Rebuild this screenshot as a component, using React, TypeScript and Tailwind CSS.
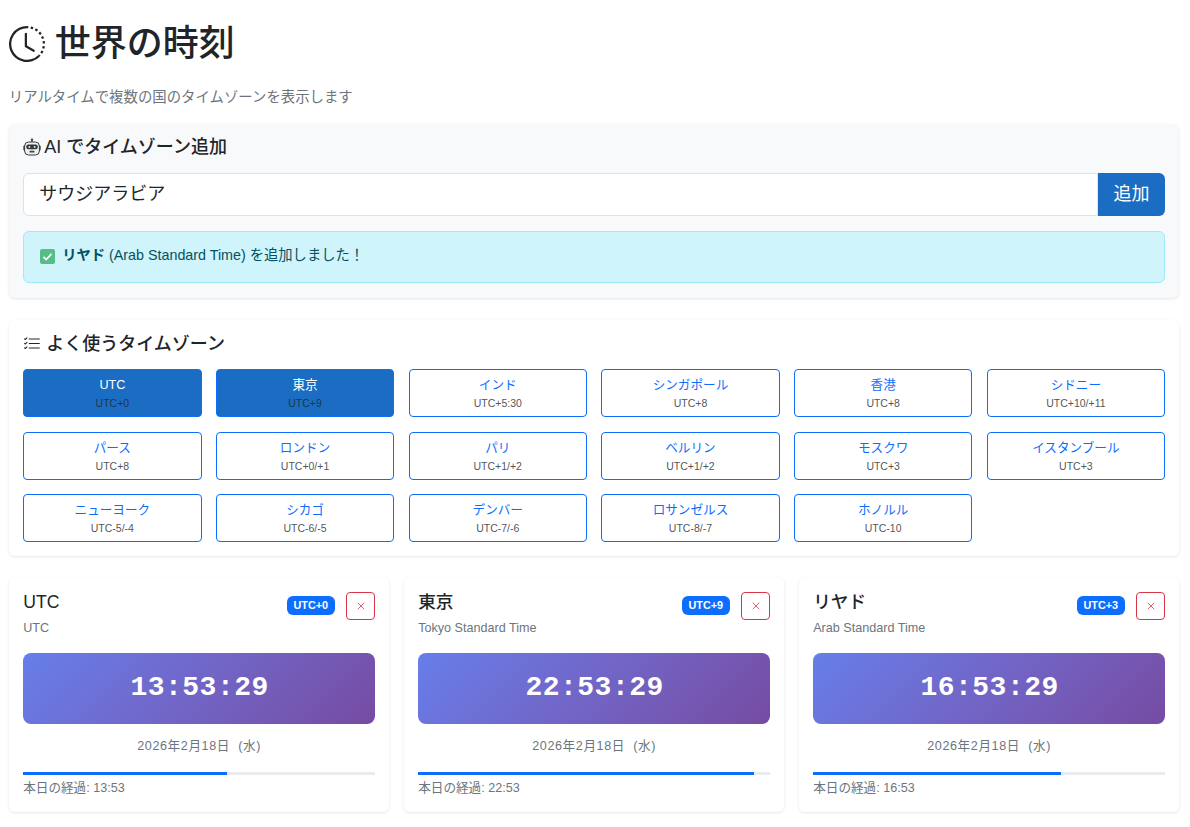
import { X } from "lucide-react";

const sans = "font-['Liberation_Sans','Noto_Sans_CJK_JP',sans-serif]";

const zones = [
  { name: "UTC", offset: "UTC+0", active: true },
  { name: "東京", offset: "UTC+9", active: true },
  { name: "インド", offset: "UTC+5:30" },
  { name: "シンガポール", offset: "UTC+8" },
  { name: "香港", offset: "UTC+8" },
  { name: "シドニー", offset: "UTC+10/+11" },
  { name: "パース", offset: "UTC+8" },
  { name: "ロンドン", offset: "UTC+0/+1" },
  { name: "パリ", offset: "UTC+1/+2" },
  { name: "ベルリン", offset: "UTC+1/+2" },
  { name: "モスクワ", offset: "UTC+3" },
  { name: "イスタンブール", offset: "UTC+3" },
  { name: "ニューヨーク", offset: "UTC-5/-4" },
  { name: "シカゴ", offset: "UTC-6/-5" },
  { name: "デンバー", offset: "UTC-7/-6" },
  { name: "ロサンゼルス", offset: "UTC-8/-7" },
  { name: "ホノルル", offset: "UTC-10" },
];

const clocks = [
  { name: "UTC", tz: "UTC", offset: "UTC+0", time: "13:53:29", elapsed: "13:53", pct: 57.9 },
  { name: "東京", tz: "Tokyo Standard Time", offset: "UTC+9", time: "22:53:29", elapsed: "22:53", pct: 95.4 },
  { name: "リヤド", tz: "Arab Standard Time", offset: "UTC+3", time: "16:53:29", elapsed: "16:53", pct: 70.4 },
];

function ClockHistory() {
  return (
    <svg width="36" height="36" viewBox="0 0 16 16" fill="#212529">
      <path d="M8.515 1.019A7 7 0 0 0 8 1V0a8 8 0 0 1 .589.022zm2.004.45a7 7 0 0 0-.985-.299l.219-.976q.576.129 1.126.342zm1.37.71a7 7 0 0 0-.439-.27l.493-.87a8 8 0 0 1 .979.654l-.615.789a7 7 0 0 0-.418-.302zm1.834 1.79a7 7 0 0 0-.653-.796l.724-.69q.406.429.747.91zm.744 1.352a7 7 0 0 0-.214-.468l.893-.45a8 8 0 0 1 .45 1.088l-.95.313a7 7 0 0 0-.179-.483m.53 2.507a7 7 0 0 0-.1-1.025l.985-.17q.1.58.116 1.17zm-.131 1.538q.05-.254.081-.51l.993.123a8 8 0 0 1-.23 1.155l-.964-.267q.069-.247.12-.501m-.952 2.379q.276-.436.486-.908l.914.405q-.24.54-.555 1.038zm-.964 1.205q.183-.183.35-.378l.758.653a8 8 0 0 1-.401.432z" />
      <path d="M8 1a7 7 0 1 0 4.95 11.95l.707.707A8.001 8.001 0 1 1 8 0z" />
      <path d="M7.5 3a.5.5 0 0 1 .5.5v5.21l3.248 1.856a.5.5 0 0 1-.496.868l-3.5-2A.5.5 0 0 1 7 9V3.5a.5.5 0 0 1 .5-.5" />
    </svg>
  );
}

function RobotEmoji() {
  return (
    <svg width="18" height="18" viewBox="0 0 18 18">
      <circle cx="9" cy="1.8" r="1.2" fill="#3c4650" />
      <rect x="8.4" y="2" width="1.2" height="2.5" fill="#3c4650" />
      <rect x="0.3" y="7.5" width="2" height="5" rx="1" fill="#3c4650" />
      <rect x="15.7" y="7.5" width="2" height="5" rx="1" fill="#3c4650" />
      <rect x="1.6" y="4" width="14.8" height="13" rx="4" fill="#f4f1ea" stroke="#2f3840" strokeWidth="1" />
      <rect x="3.2" y="6.6" width="11.6" height="4.6" rx="2.2" fill="#2f3840" />
      <circle cx="6.4" cy="8.9" r="1" fill="#e8eaec" />
      <circle cx="11.6" cy="8.9" r="1" fill="#e8eaec" />
      <rect x="6.5" y="12.8" width="5" height="1.8" rx="0.6" fill="#3c4650" />
    </svg>
  );
}

function CheckEmoji() {
  return (
    <svg width="15" height="15" viewBox="0 0 15 15">
      <rect width="15" height="15" rx="2" fill="#55bd85" />
      <path d="M3.4 7.8l2.8 2.7 5.3-5.6" fill="none" stroke="#ffffff" strokeWidth="1.7" />
    </svg>
  );
}

function ListCheck() {
  return (
    <svg width="18" height="18" viewBox="0 0 16 16" fill="#212529">
      <path fillRule="evenodd" d="M5 11.5a.5.5 0 0 1 .5-.5h9a.5.5 0 0 1 0 1h-9a.5.5 0 0 1-.5-.5m0-4a.5.5 0 0 1 .5-.5h9a.5.5 0 0 1 0 1h-9a.5.5 0 0 1-.5-.5m0-4a.5.5 0 0 1 .5-.5h9a.5.5 0 0 1 0 1h-9a.5.5 0 0 1-.5-.5M3.854 2.146a.5.5 0 0 1 0 .708l-1.5 1.5a.5.5 0 0 1-.708 0l-.5-.5a.5.5 0 1 1 .708-.708L2 3.293l1.146-1.147a.5.5 0 0 1 .708 0m0 4a.5.5 0 0 1 0 .708l-1.5 1.5a.5.5 0 0 1-.708 0l-.5-.5a.5.5 0 1 1 .708-.708L2 7.293l1.146-1.147a.5.5 0 0 1 .708 0m0 4a.5.5 0 0 1 0 .708l-1.5 1.5a.5.5 0 0 1-.708 0l-.5-.5a.5.5 0 0 1 .708-.708l.146.147 1.146-1.147a.5.5 0 0 1 .708 0" />
    </svg>
  );
}

export default function App() {
  return (
    <div className={`min-h-screen bg-white pl-[8.8px] pr-[10.6px] text-[#212529] ${sans}`}>
      <div className="flex h-[87px] items-center gap-[10px]">
        <ClockHistory />
        <h1 className="text-[36px] font-medium leading-[42px]">世界の時刻</h1>
      </div>
      <p className="h-[37px] text-[14.4px] leading-[20px] text-[#6c757d]">
        リアルタイムで複数の国のタイムゾーンを表示します
      </p>

      <section className="rounded-md bg-[#f8f9fa] px-[14.4px] pb-[15px] pt-[11px] shadow-[0_1px_3px_rgba(0,0,0,0.1)]">
        <h2 className="flex h-[24px] items-center gap-[3px] text-[18px] font-medium">
          <RobotEmoji />
          AI でタイムゾーン追加
        </h2>
        <div className="mt-[14px] flex h-[43px]">
          <div className="flex flex-1 items-center rounded-l-md border border-[#dee2e6] bg-white px-[15px] text-[18px]">
            サウジアラビア
          </div>
          <button className="w-[67px] rounded-r-md bg-[#1a6dc2] text-[18px] text-white">追加</button>
        </div>
        <div className="mt-[15px] flex h-[52px] items-center gap-[7px] rounded-md border border-[#9eeaf9] bg-[#cff4fc] px-[16px] pb-[2px] text-[14.3px] text-[#055160]">
          <CheckEmoji />
          <span>
            <strong className="font-bold">リヤド</strong> (Arab Standard Time) を追加しました！
          </span>
        </div>
      </section>

      <section className="mt-[22px] rounded-md bg-white px-[14.4px] pb-[13.6px] pt-[11px] shadow-[0_1px_3px_rgba(0,0,0,0.1)]">
        <h2 className="flex h-[26px] items-center gap-[5px] text-[18px] font-medium">
          <ListCheck />
          よく使うタイムゾーン
        </h2>
        <div className="mt-[12.4px] grid grid-cols-6 gap-[14.4px]">
          {zones.map((z) => (
            <button
              key={z.name}
              className={`flex h-[48px] flex-col items-center justify-center rounded border border-[#0d6efd] pt-[1px] ${
                z.active ? "bg-[#1a6dc2] text-white" : "bg-white text-[#0d6efd]"
              }`}
            >
              <span className="text-[12.6px] leading-[19px]">{z.name}</span>
              <span className="text-[10.5px] leading-[16px] text-[#212529]/80">{z.offset}</span>
            </button>
          ))}
        </div>
      </section>

      <div className="mt-[21px] grid grid-cols-3 gap-[14.4px]">
        {clocks.map((c) => (
          <article
            key={c.name}
            className="h-[235px] rounded-md bg-white px-[14.4px] pt-[15px] shadow-[0_1px_3px_rgba(0,0,0,0.1)]"
          >
            <div className="flex items-start justify-between">
              <div>
                <h3 className="text-[17.6px] font-medium leading-[21px]">{c.name}</h3>
                <p className="mt-[6px] text-[12.6px] leading-[18px] text-[#6c757d]">{c.tz}</p>
              </div>
              <div className="flex items-center gap-[11px]">
                <span className="rounded-md bg-[#0d6efd] px-[7px] py-[3px] text-[10.8px] font-bold leading-[13px] text-white">
                  {c.offset}
                </span>
                <button className="flex h-[28px] w-[29px] items-center justify-center rounded border border-[#dc3545] text-[#dc3545]">
                  <X size={12} strokeWidth={1.6} />
                </button>
              </div>
            </div>
            <div className="mt-[16px] flex h-[71px] items-center justify-center rounded-lg bg-linear-135 from-[#667eea] to-[#764ba2] pl-[1px] font-['Liberation_Mono',monospace] text-[28px] font-bold tracking-[0.5px] text-white">
              {c.time}
            </div>
            <p className="mt-[13px] text-center text-[12.6px] leading-[18px] tracking-[0.6px] text-[#6c757d]">
              2026年2月18日 &nbsp;(水)
            </p>
            <div className="mt-[17px] h-[3px] bg-[#e9ecef]">
              <div className="h-full bg-[#0d6efd]" style={{ width: `${c.pct}%` }} />
            </div>
            <p className="mt-[4px] text-[12.6px] leading-[18px] text-[#6c757d]">本日の経過: {c.elapsed}</p>
          </article>
        ))}
      </div>
    </div>
  );
}
